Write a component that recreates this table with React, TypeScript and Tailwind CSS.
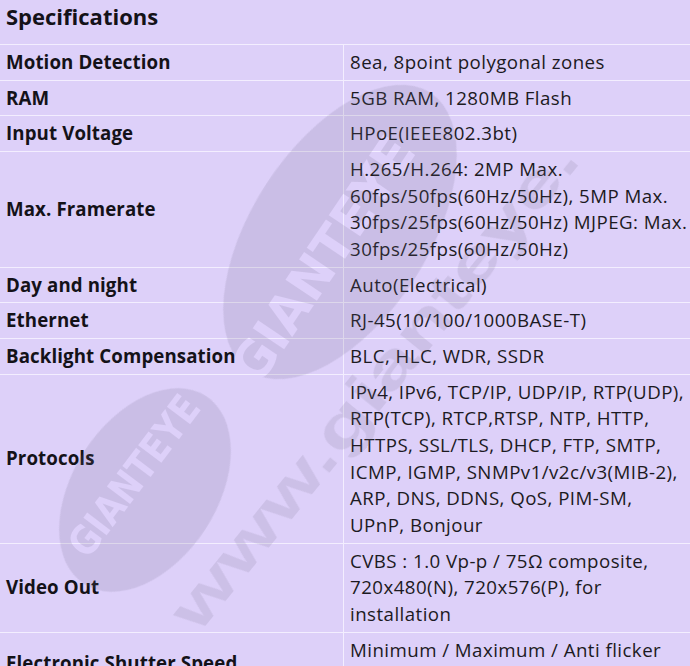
import React from 'react';

type SpecRow = {
  label: string;
  lines: string[];
};

const specs: SpecRow[] = [
  { label: 'Motion Detection', lines: ['8ea, 8point polygonal zones'] },
  { label: 'RAM', lines: ['5GB RAM, 1280MB Flash'] },
  { label: 'Input Voltage', lines: ['HPoE(IEEE802.3bt)'] },
  {
    label: 'Max. Framerate',
    lines: [
      'H.265/H.264: 2MP Max.',
      '60fps/50fps(60Hz/50Hz), 5MP Max.',
      '30fps/25fps(60Hz/50Hz) MJPEG: Max.',
      '30fps/25fps(60Hz/50Hz)',
    ],
  },
  { label: 'Day and night', lines: ['Auto(Electrical)'] },
  { label: 'Ethernet', lines: ['RJ-45(10/100/1000BASE-T)'] },
  { label: 'Backlight Compensation', lines: ['BLC, HLC, WDR, SSDR'] },
  {
    label: 'Protocols',
    lines: [
      'IPv4, IPv6, TCP/IP, UDP/IP, RTP(UDP),',
      'RTP(TCP), RTCP,RTSP, NTP, HTTP,',
      'HTTPS, SSL/TLS, DHCP, FTP, SMTP,',
      'ICMP, IGMP, SNMPv1/v2c/v3(MIB-2),',
      'ARP, DNS, DDNS, QoS, PIM-SM,',
      'UPnP, Bonjour',
    ],
  },
  {
    label: 'Video Out',
    lines: ['CVBS : 1.0 Vp-p / 75Ω composite,', '720x480(N), 720x576(P), for', 'installation'],
  },
  {
    label: 'Electronic Shutter Speed',
    lines: ['Minimum / Maximum / Anti flicker', '(2 ~ 1/12,000 sec)'],
  },
];

const logoFont = "'DejaVu Sans Condensed', 'DejaVu Sans', sans-serif";

// faint logo watermark laid over the table; the word is cut out of each oval
const Watermark = () => (
  <svg
    className="pointer-events-none absolute left-0 top-0"
    width="690"
    height="720"
    viewBox="0 0 690 720"
  >
    <defs>
      <mask id="logo-cut" maskUnits="userSpaceOnUse" x="0" y="0" width="690" height="720">
        <rect x="0" y="0" width="690" height="720" fill="#fff" />
        <g fill="#000" fontFamily={logoFont} fontWeight="700">
          <text
            x="0"
            y="0"
            fontSize="52"
            textLength="285"
            lengthAdjust="spacingAndGlyphs"
            transform="translate(258 388) rotate(-56)"
          >
            GIANTEYE
          </text>
          <text
            x="0"
            y="0"
            fontSize="40"
            textLength="190"
            lengthAdjust="spacingAndGlyphs"
            transform="translate(88 560) rotate(-53)"
          >
            GIANTEYE
          </text>
        </g>
      </mask>
    </defs>
    <g fill="#6b6480" fillOpacity="0.16" mask="url(#logo-cut)">
      <ellipse cx="340" cy="232" rx="88" ry="166" transform="rotate(33 340 232)" />
      <ellipse cx="145" cy="490" rx="72" ry="112" transform="rotate(33 145 490)" />
    </g>
    <text
      x="0"
      y="0"
      fontSize="62"
      fontWeight="700"
      fontFamily="'Liberation Sans', Arial, sans-serif"
      fill="#6b6480"
      fillOpacity="0.15"
      textLength="610"
      lengthAdjust="spacingAndGlyphs"
      transform="translate(198 635) rotate(-51)"
    >
      www.gianteye.
    </text>
  </svg>
);

export default function App() {
  return (
    <div className="relative w-[690px] overflow-hidden bg-[#ddd0f9] text-[#1c1a22] font-['Open_Sans','Noto_Sans',sans-serif]">
      <div className="h-[45px] border-b border-[#f3eeff] px-[6px] pt-[1px] text-[22px] font-bold leading-[30px] text-[#141218]">
        Specifications
      </div>
      {specs.map((row) => (
        <div
          key={row.label}
          className="grid grid-cols-[344px_1fr] border-b border-[#f3eeff] text-[18.7px] leading-[26.67px]"
        >
          <div className="flex items-center border-r border-[#f3eeff] px-[6px] font-bold tracking-[0.1px] text-[#141218]">
            {row.label}
          </div>
          <div className="px-[6px] py-[4px] tracking-[0.45px]">
            {row.lines.map((line, i) => (
              <div key={i} className="whitespace-nowrap">
                {line}
              </div>
            ))}
          </div>
        </div>
      ))}
      <Watermark />
    </div>
  );
}
